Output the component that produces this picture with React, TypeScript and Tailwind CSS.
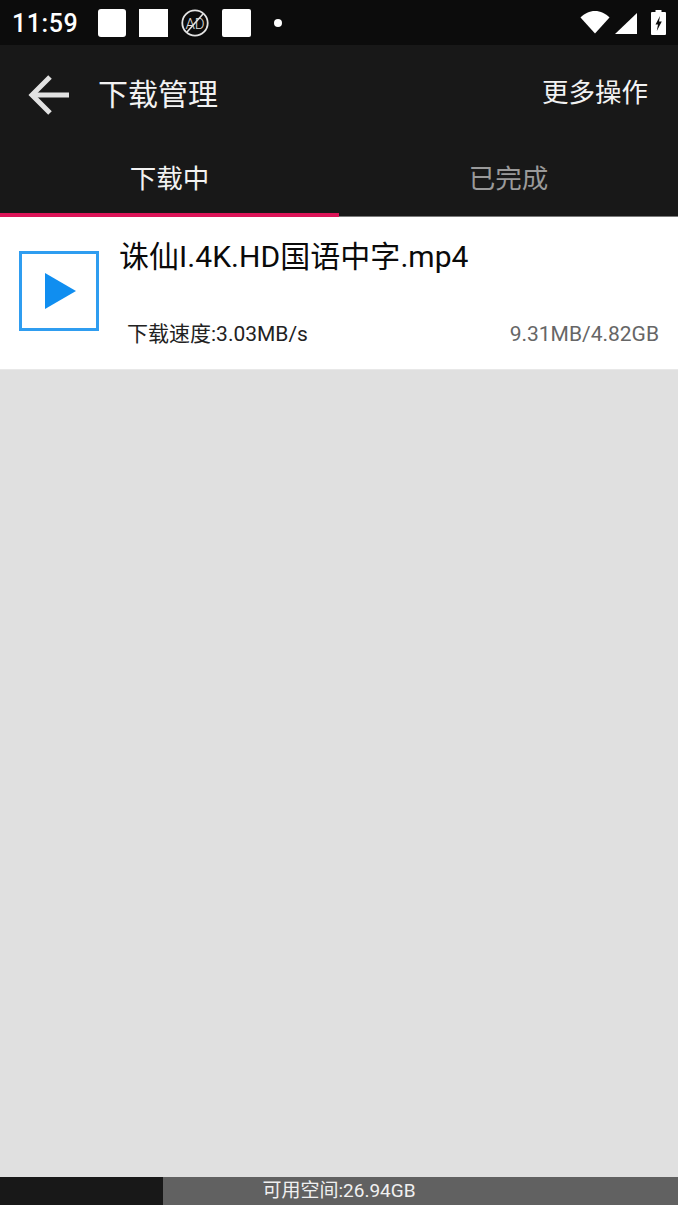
const fontStack = "font-['Roboto','Noto_Sans_CJK_SC',sans-serif]";

function StatusBar() {
  return (
    <div className="h-[45px] bg-[#0c0c0c] flex items-center pl-3 pr-[12px] text-white">
      <span className="text-[25px] font-medium leading-none tracking-[0.6px] w-[86px] mt-[1px]">11:59</span>
      <div className="w-7 h-7 bg-white rounded-[3px]" />
      <div className="w-[29px] h-7 bg-white ml-[13px]" />
      <svg width="30" height="30" viewBox="0 0 30 30" className="ml-[12px]" fill="none" stroke="#e4e4e4">
        <circle cx="15" cy="15" r="12.7" strokeWidth="1.8" />
        <line x1="7" y1="24" x2="23" y2="6" strokeWidth="1.6" />
        <text x="15" y="20.5" textAnchor="middle" fontSize="15" fontFamily="Roboto" fontWeight="300" fill="#e0e0e0" stroke="none">AD</text>
      </svg>
      <div className="w-[29px] h-7 bg-white rounded-[2px] ml-[12px]" />
      <div className="w-2 h-2 bg-white rounded-full ml-[23px]" />
      <div className="flex-1" />
      <svg width="30" height="24" viewBox="0 0 30 24" className="mr-[4px] -mt-[1px]">
        <path d="M0.5 7.5C4.5 3.5 9.5 1 15 1s10.5 2.5 14.5 6.5L15 23.5z" fill="#fff" />
      </svg>
      <svg width="22" height="21" viewBox="0 0 22 21" className="ml-[1px] mt-[1px]">
        <path d="M22 0v21H0z" fill="#fff" />
      </svg>
      <svg width="15" height="25" viewBox="0 0 15 25" className="ml-[14px]">
        <path d="M4.5 0h6v2H14a1 1 0 0 1 1 1v21a1 1 0 0 1-1 1H1a1 1 0 0 1-1-1V3a1 1 0 0 1 1-1h3.5z" fill="#fff" />
        <path d="M9 6 4.5 14.5H7L5.8 21 10.8 11.5H8z" fill="#0c0c0c" />
      </svg>
    </div>
  );
}

function Toolbar() {
  return (
    <div className="h-[98px] bg-[#181818] flex items-center text-white">
      <svg width="42" height="40" viewBox="0 0 42 40" className="ml-[28px] mt-[1px]" fill="none" stroke="#e2e2e2" strokeWidth="5">
        <path d="M41 20H4" />
        <path d="M22 2 4 20l18 18" />
      </svg>
      <span className="ml-[28px] text-[30px] leading-none mt-[2px] text-[#f2f2f2]">下载管理</span>
      <span className="ml-auto mr-[30px] text-[26.5px] leading-none -mt-[1px] text-[#f2f2f2]">更多操作</span>
    </div>
  );
}

function Tabs() {
  return (
    <div className="h-[74px] bg-[#181818] flex">
      <div className="w-[339px] border-b-[4px] border-[#dc1458] flex items-center justify-center pt-[2px] text-[26.5px] text-[#f2f2f2]">
        下载中
      </div>
      <div className="flex-1 border-b border-[#7a7a7a] flex items-center justify-center pb-[1px] text-[26.5px] text-[#9a9a9a]">
        已完成
      </div>
    </div>
  );
}

function DownloadRow() {
  return (
    <div className="h-[153px] bg-white border-b border-[#e8e8e8] flex pl-[19px] pr-[19px]">
      <div className="w-20 h-20 mt-[34px] border-[3px] border-[#2f9df0] flex items-center justify-center shrink-0">
        <svg width="31" height="36" viewBox="0 0 31 36" className="ml-[3px]">
          <path d="M0 0 31 18 0 36z" fill="#108ef0" />
        </svg>
      </div>
      <div className="flex-1 min-w-0 ml-[21px] flex flex-col">
        <div className="mt-[21px] -ml-[1px] text-[30px] tracking-[0.05px] leading-[38px] text-[#0a0a0a]">诛仙I.4K.HD国语中字.mp4</div>
        <div className="mt-[43px] flex items-center justify-between">
          <span className="ml-[7px] text-[21px] leading-[30px] text-[#222]">下载速度:3.03MB/s</span>
          <span className="text-[21px] leading-[30px] text-[#666]">9.31MB/4.82GB</span>
        </div>
      </div>
    </div>
  );
}

function StorageBar() {
  return (
    <div className="h-[28px] bg-[#616161] relative">
      <div className="absolute left-0 top-0 bottom-0 w-[163px] bg-[#181818]" />
      <div className="relative text-center text-[19px] leading-[28px] text-[#f0f0f0]">可用空间:26.94GB</div>
    </div>
  );
}

export default function App() {
  return (
    <div className={`h-[1205px] w-[678px] flex flex-col bg-[#e0e0e0] overflow-hidden ${fontStack}`}>
      <StatusBar />
      <Toolbar />
      <Tabs />
      <DownloadRow />
      <div className="flex-1" />
      <StorageBar />
    </div>
  );
}
